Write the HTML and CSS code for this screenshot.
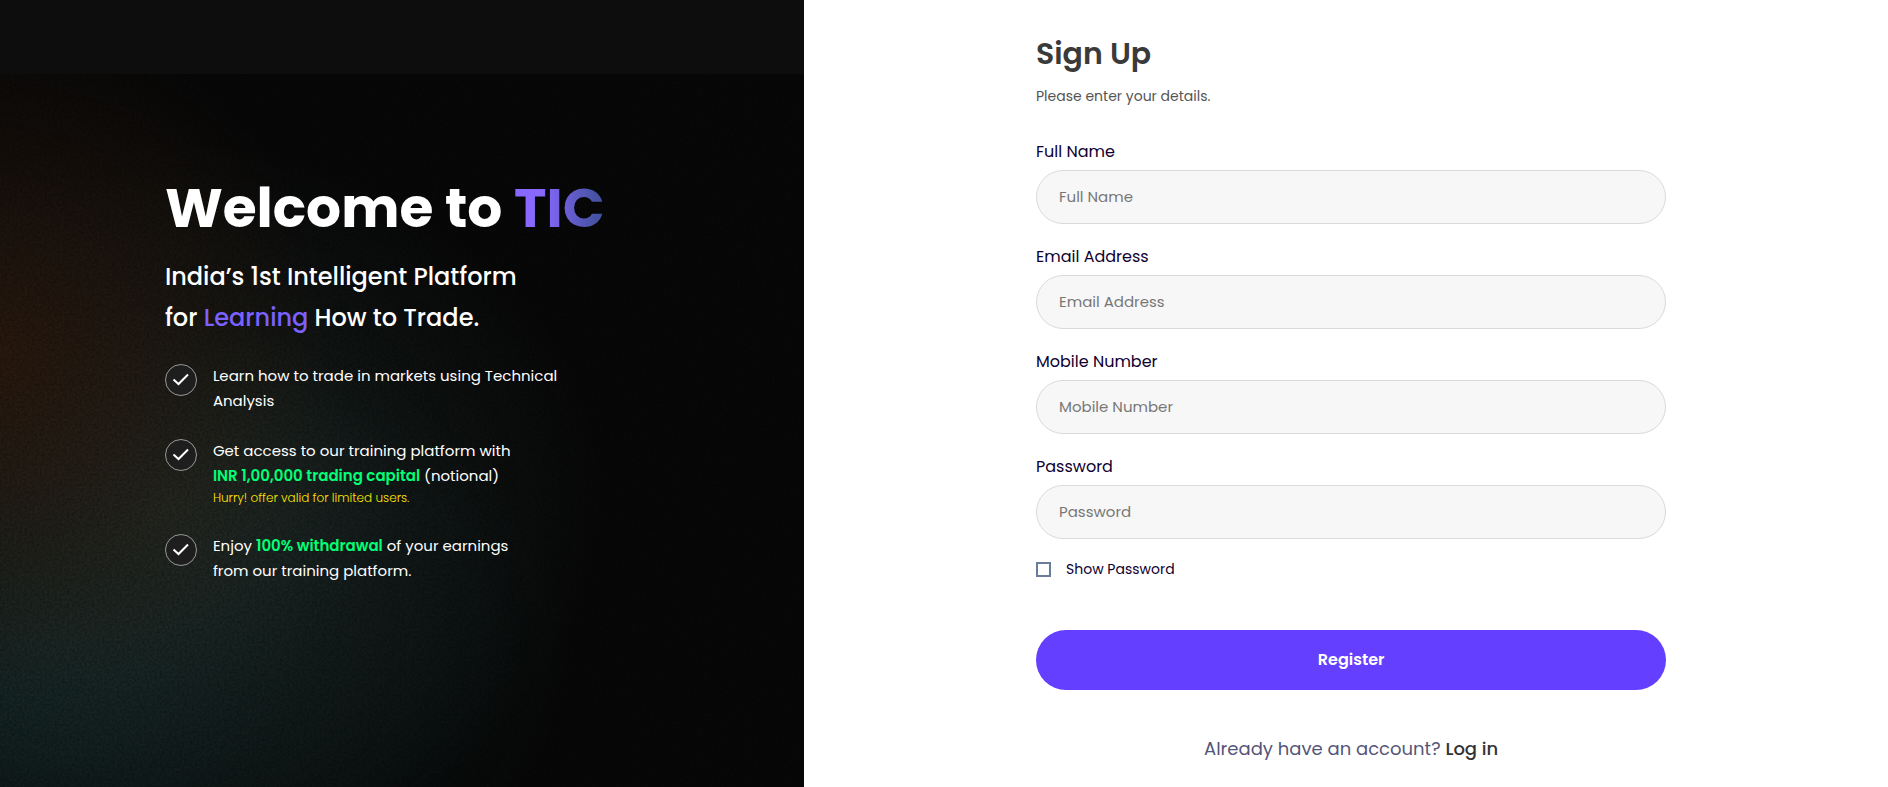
FILE: index.html
```html
<!DOCTYPE html>
<html lang="en">
<head>
<meta charset="utf-8">
<meta name="viewport" content="width=device-width, initial-scale=1">
<title>Sign Up</title>
<link rel="stylesheet" href="styles.css">
</head>
<body>
<div class="page">
  <section class="intro">
    <div class="intro-bar"></div>
    <div class="intro-body">
      <svg class="grain" aria-hidden="true">
        <filter id="noise">
          <feTurbulence type="fractalNoise" baseFrequency="0.4" numOctaves="2" seed="4"/>
          <feColorMatrix values="0 0 0 0 0  0 0 0 0 0  0 0 0 0 0  1.6 0 0 0 -0.5"/>
        </filter>
        <rect width="100%" height="100%" filter="url(#noise)"/>
      </svg>
      <div class="intro-content">
        <h1 class="welcome">Welcome to <span class="brand">TIC</span></h1>
        <p class="tagline">India’s 1st Intelligent Platform<br>for <span class="accent">Learning</span> How to Trade.</p>
        <ul class="benefits">
          <li class="benefit">
            <svg class="tick" viewBox="0 0 32 32" aria-hidden="true"><circle cx="16" cy="16" r="15.5"/><path d="M8.5 15.5l5 4.500 9.500-9.500"/></svg>
            <p class="benefit-text">Learn how to trade in markets using Technical<br>Analysis</p>
          </li>
          <li class="benefit">
            <svg class="tick" viewBox="0 0 32 32" aria-hidden="true"><circle cx="16" cy="16" r="15.5"/><path d="M8.5 15.5l5 4.500 9.500-9.500"/></svg>
            <div>
              <p class="benefit-text">Get access to our training platform with<br><strong>INR 1,00,000 trading capital</strong> (notional)</p>
              <p class="hurry">Hurry! offer valid for limited users.</p>
            </div>
          </li>
          <li class="benefit">
            <svg class="tick" viewBox="0 0 32 32" aria-hidden="true"><circle cx="16" cy="16" r="15.5"/><path d="M8.5 15.5l5 4.500 9.500-9.500"/></svg>
            <p class="benefit-text">Enjoy <strong>100% withdrawal</strong> of your earnings<br>from our training platform.</p>
          </li>
        </ul>
      </div>
    </div>
  </section>
  <main class="signup">
    <form class="form">
      <h2 class="title">Sign Up</h2>
      <p class="subtitle">Please enter your details.</p>
      <div class="fields">
        <div class="field">
          <label for="name">Full Name</label>
          <input class="text-input" id="name" type="text" placeholder="Full Name">
        </div>
        <div class="field">
          <label for="email">Email Address</label>
          <input class="text-input" id="email" type="email" placeholder="Email Address">
        </div>
        <div class="field">
          <label for="mobile">Mobile Number</label>
          <input class="text-input" id="mobile" type="tel" placeholder="Mobile Number">
        </div>
        <div class="field">
          <label for="password">Password</label>
          <input class="text-input" id="password" type="password" placeholder="Password">
        </div>
      </div>
      <div class="show">
        <input class="checkbox" id="show" type="checkbox">
        <label for="show">Show Password</label>
      </div>
      <button class="register" type="submit">Register</button>
      <p class="login">Already have an account? <a href="#login">Log in</a></p>
    </form>
  </main>
</div>
</body>
</html>
```
FILE: styles.css
```css
* { box-sizing: border-box; }

body {
  margin: 0;
  background: #fff;
  font-family: Poppins, Inter, "Open Sans", sans-serif;
}

h1, h2, p, ul { margin: 0; padding: 0; }

.page {
  display: grid;
  grid-template-columns: 42.6% 1fr;
  min-height: 100vh;
}

.intro {
  display: flex;
  flex-direction: column;
  background: #0d0d0d;
  color: #fff;
}

.intro-bar { height: 74px; }

.intro-body {
  position: relative;
  flex: 1;
  padding: 96px 24px 24px 20.5%;
  background:
    radial-gradient(ellipse 340px 340px at 0 40%, rgba(44, 25, 13, 0.9), rgba(38, 24, 14, 0.45) 55%, transparent),
    radial-gradient(ellipse 440px 360px at 20% 60%, rgba(38, 48, 43, 0.9), rgba(26, 36, 34, 0.45) 55%, transparent),
    radial-gradient(ellipse 520px 340px at 6% 80%, rgba(22, 46, 46, 0.95), rgba(16, 36, 36, 0.5) 50%, transparent),
    #080808;
}

.grain {
  position: absolute;
  inset: 0;
  width: 100%;
  height: 100%;
  opacity: 0.35;
}

.intro-content { position: relative; }

.welcome {
  font-size: 55px;
  font-weight: 700;
  line-height: 76px;
}

.brand {
  background: linear-gradient(90deg, #8868ff 30%, #4653a3 90%);
  background-clip: text;
  color: transparent;
}

.tagline {
  margin-top: 10px;
  font-size: 24px;
  font-weight: 500;
  line-height: 41px;
}

.accent { color: #7b61ff; }

.benefits {
  display: grid;
  gap: 25px;
  margin-top: 25px;
  list-style: none;
}

.benefit {
  display: flex;
  gap: 16px;
}

.tick {
  flex: none;
  width: 32px;
  height: 32px;
  margin-top: 1px;
  fill: #1e1e1e;
  stroke: #999;
  stroke-width: 1;
}

.tick path {
  fill: none;
  stroke: #fff;
  stroke-width: 2;
}

.benefit-text {
  font-size: 15px;
  line-height: 25px;
}

.benefit-text strong {
  color: #00ff75;
  font-weight: 600;
}

.hurry {
  color: #ffe600;
  font-size: 12px;
  font-weight: 300;
  line-height: 20px;
}

.signup {
  display: flex;
  justify-content: center;
  padding: 32px 0 24px 10px;
}

.form {
  width: 58.7%;
  color: #10002f;
}

.title {
  color: #3a3a3a;
  font-size: 30px;
  font-weight: 600;
  line-height: 44px;
}

.subtitle {
  margin-top: 10px;
  color: #555;
  font-size: 14px;
  line-height: 20px;
}

.fields {
  display: grid;
  gap: 21px;
  margin-top: 34px;
}

.field {
  display: grid;
  gap: 6px;
  font-size: 16px;
  line-height: 24px;
}

.text-input {
  width: 100%;
  height: 54px;
  padding: 0 22px 1px;
  border: 1px solid #dadada;
  border-radius: 27px;
  background: #f7f7f7;
  font: inherit;
  font-size: 15px;
}

.text-input::placeholder { color: #777; }

.show {
  display: flex;
  align-items: center;
  gap: 15px;
  margin-top: 19px;
  font-size: 14px;
  line-height: 22px;
}

.checkbox {
  width: 15px;
  height: 15px;
  margin: 0;
  border: 2px solid #6b7c9b;
  background: #fff;
  appearance: none;
}

.checkbox:checked { background: #6b7c9b; }

.register {
  width: 100%;
  height: 60px;
  margin-top: 50px;
  padding: 0 0 2px;
  border: 0;
  border-radius: 30px;
  background: #643fff;
  color: #fff;
  font: inherit;
  font-size: 16px;
  font-weight: 600;
}

.login {
  margin-top: 46px;
  color: #555577;
  font-size: 18px;
  line-height: 26px;
  text-align: center;
}

.login a {
  color: #333;
  font-weight: 500;
  text-decoration: none;
}
```
